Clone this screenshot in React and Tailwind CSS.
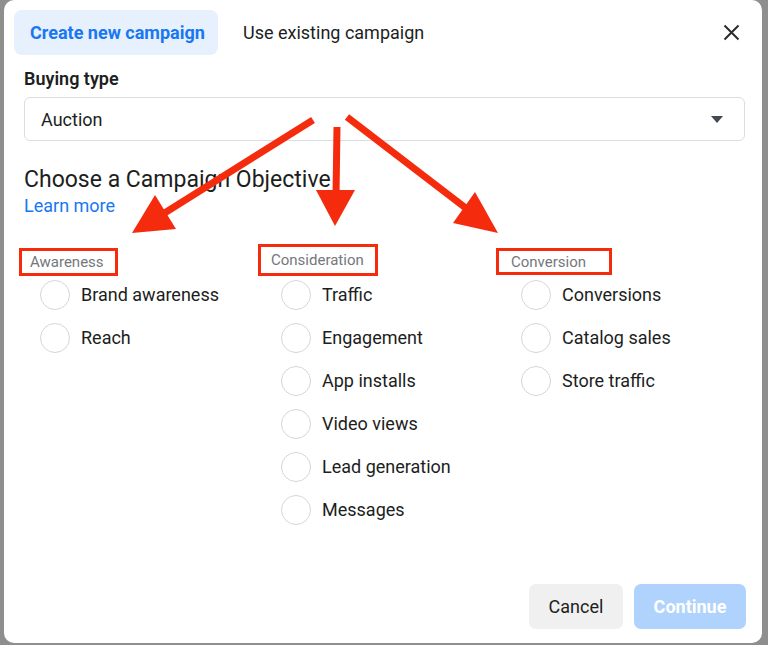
import React from 'react';

const columns = [
  {
    label: 'Awareness',
    box: 'ml-0 mt-0 w-[99px] h-[28px] pl-[8px]',
    list: 'mt-[4px]',
    items: ['Brand awareness', 'Reach'],
  },
  {
    label: 'Consideration',
    box: 'ml-[-2px] mt-[-4px] w-[120px] h-[32px] pl-[10px]',
    list: 'mt-[4px]',
    items: ['Traffic', 'Engagement', 'App installs', 'Video views', 'Lead generation', 'Messages'],
  },
  {
    label: 'Conversion',
    box: 'ml-[-4px] mt-0 w-[116px] h-[27px] pl-[12px]',
    list: 'mt-[5px]',
    items: ['Conversions', 'Catalog sales', 'Store traffic'],
  },
];

function Radio({ label }) {
  return (
    <label className="flex items-center gap-[11px] h-[30px] pl-[21px] cursor-pointer">
      <span className="w-[30px] h-[30px] rounded-full border-[1.5px] border-[#d3d6db] bg-white shrink-0" />
      <span className="text-[18px] text-[#1c1e21] leading-[22px]">{label}</span>
    </label>
  );
}

function Arrows() {
  const red = '#f52b0e';
  return (
    <svg className="absolute inset-0 pointer-events-none" width="768" height="645" viewBox="0 0 768 645">
      <line x1="313" y1="120" x2="163" y2="214" stroke={red} strokeWidth="7" />
      <polygon points="132,233 155,195 176,229" fill={red} />
      <line x1="337" y1="127" x2="336" y2="196" stroke={red} strokeWidth="7" />
      <polygon points="335,226 316,190 355,190" fill={red} />
      <line x1="347" y1="117" x2="467" y2="209" stroke={red} strokeWidth="7" />
      <polygon points="498,233 475,192 453,223" fill={red} />
    </svg>
  );
}

export default function App() {
  return (
    <div
      className="relative w-[768px] h-[645px] bg-[#8e8e8e] overflow-hidden"
      style={{ fontFamily: 'Roboto, "Liberation Sans", sans-serif' }}
    >
      <div className="ml-[4px] w-[758px] h-[643px] bg-white rounded-[10px] flex flex-col">
        {/* tabs */}
        <div className="flex items-center mt-[10px] ml-[10px] pr-[19px]">
          <button className="h-[45px] w-[204px] rounded-[8px] bg-[#e7f0fd] text-[#1877f2] text-[18px] font-bold text-left pl-[16px]">
            Create new campaign
          </button>
          <button className="h-[45px] ml-[25px] text-[18px] text-[#1c1e21]">Use existing campaign</button>
          <button className="ml-auto w-[24px] h-[24px] flex items-center justify-center">
            <svg width="17" height="17" viewBox="0 0 17 17">
              <path d="M1.5 1.5L15.5 15.5M15.5 1.5L1.5 15.5" stroke="#2b2b2b" strokeWidth="2" />
            </svg>
          </button>
        </div>

        <div className="pl-[20px] pr-[17px]">
          <div className="mt-[13px] text-[18px] font-semibold text-[#1c1e21] leading-[22px]">Buying type</div>
          <div className="mt-[7px] h-[44px] border border-[#dadde1] rounded-[6px] flex items-center pl-[16px] pr-[21px]">
            <span className="text-[18px] text-[#1c1e21]">Auction</span>
            <svg className="ml-auto" width="12" height="7" viewBox="0 0 12 7">
              <path d="M0 0H12L6 7Z" fill="#444950" />
            </svg>
          </div>

          <h2 className="mt-[25px] text-[23px] text-[#1c1e21] leading-7">Choose a Campaign Objective</h2>
          <a className="block text-[18px] text-[#1877f2] leading-[22px] mt-[1px]">Learn more</a>
        </div>

        <div className="grid grid-cols-[241px_240px_241px] ml-[15px] mt-[31px]">
          {columns.map((col) => (
            <div key={col.label} className="flex flex-col">
              <div className={`${col.box} border-[3px] border-[#f52b0e] flex items-center`}>
                <span className="text-[15px] text-[#74777c] leading-4">{col.label}</span>
              </div>
              <div className={`${col.list} flex flex-col gap-[13px]`}>
                {col.items.map((item) => (
                  <Radio key={item} label={item} />
                ))}
              </div>
            </div>
          ))}
        </div>

        <div className="mt-auto mb-[14px] mr-[16px] flex justify-end gap-[11px]">
          <button className="w-[94px] h-[45px] rounded-[7px] bg-[#f0f0f0] text-[18px] text-[#1c1e21]">
            Cancel
          </button>
          <button className="w-[112px] h-[45px] rounded-[7px] bg-[#afd3fc] text-[18px] font-bold text-white">
            Continue
          </button>
        </div>
      </div>
      <Arrows />
    </div>
  );
}
